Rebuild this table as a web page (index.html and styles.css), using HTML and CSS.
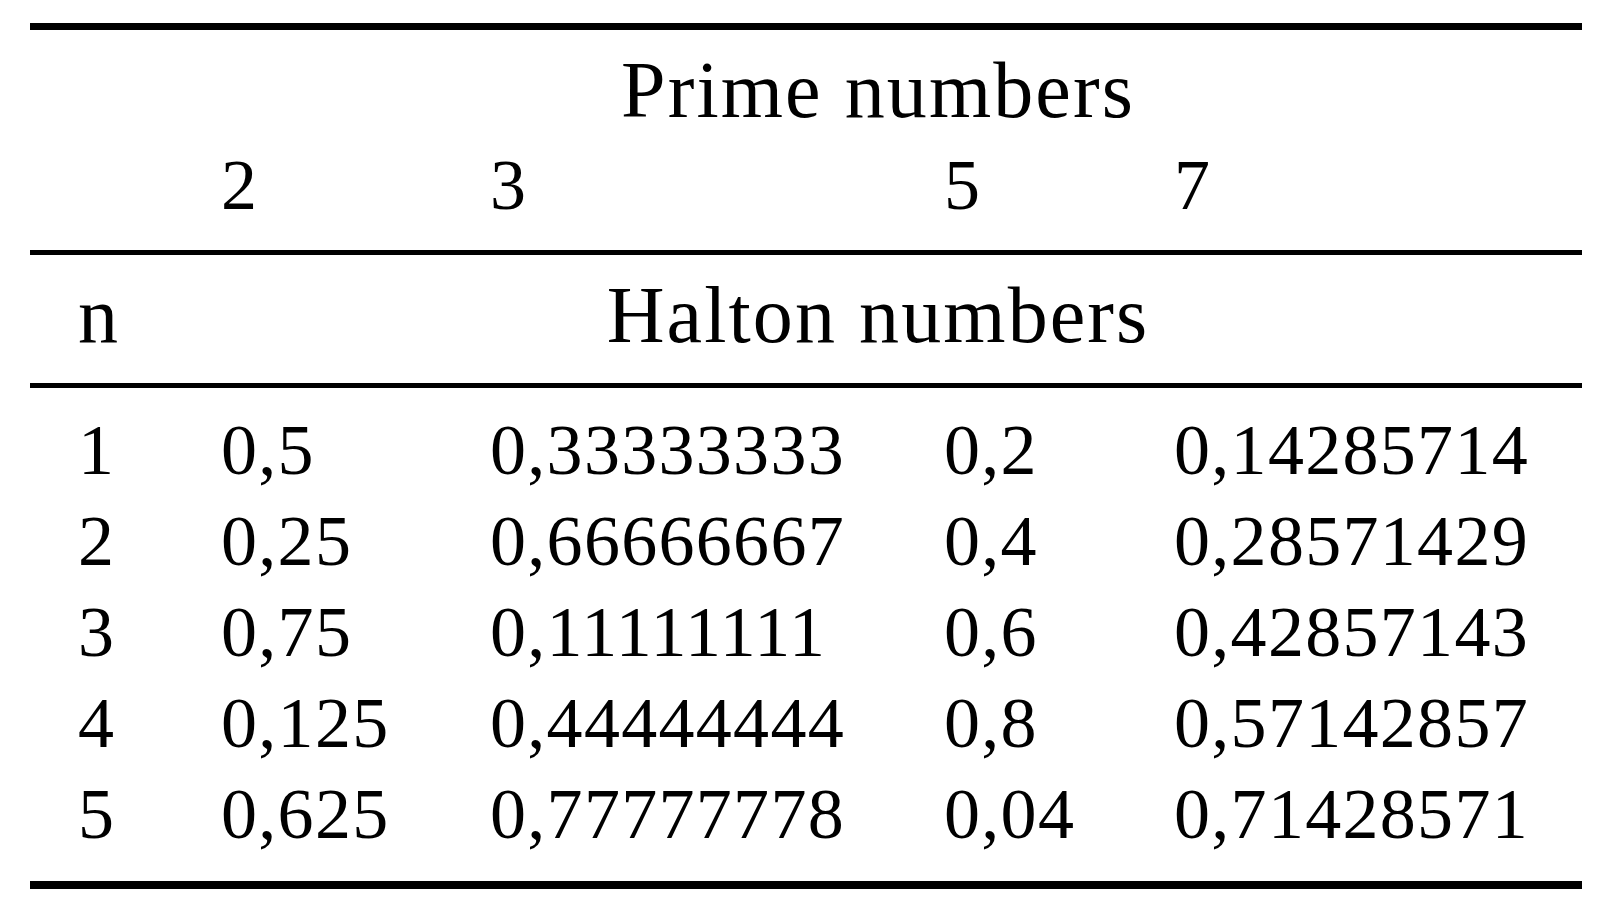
FILE: index.html
```html
<!DOCTYPE html>
<html>
<head>
<meta charset="utf-8">
<link rel="stylesheet" href="styles.css">
</head>
<body>
<div class="table">
  <div class="rule thick"></div>
  <div class="row super">
    <div class="cell span word">Prime numbers</div>
  </div>
  <div class="row primes">
    <div class="cell first"></div>
    <div class="cell">2</div>
    <div class="cell">3</div>
    <div class="cell">5</div>
    <div class="cell">7</div>
  </div>
  <div class="rule mid"></div>
  <div class="row label">
    <div class="cell first word">n</div>
    <div class="cell span word">Halton numbers</div>
  </div>
  <div class="rule mid low"></div>
  <div class="body">
    <div class="row data">
      <div class="cell first">1</div><div class="cell">0,5</div><div class="cell">0,33333333</div><div class="cell">0,2</div><div class="cell">0,14285714</div>
    </div>
    <div class="row data">
      <div class="cell first">2</div><div class="cell">0,25</div><div class="cell">0,66666667</div><div class="cell">0,4</div><div class="cell">0,28571429</div>
    </div>
    <div class="row data">
      <div class="cell first">3</div><div class="cell">0,75</div><div class="cell">0,11111111</div><div class="cell">0,6</div><div class="cell">0,42857143</div>
    </div>
    <div class="row data">
      <div class="cell first">4</div><div class="cell">0,125</div><div class="cell">0,44444444</div><div class="cell">0,8</div><div class="cell">0,57142857</div>
    </div>
    <div class="row data">
      <div class="cell first">5</div><div class="cell">0,625</div><div class="cell">0,77777778</div><div class="cell">0,04</div><div class="cell">0,71428571</div>
    </div>
  </div>
  <div class="rule bottom"></div>
</div>
</body>
</html>
```
FILE: styles.css
```css
html, body {
  margin: 0;
  padding: 0;
  background: #ffffff;
}
body {
  padding-top: 23px;
  padding-left: 30px;
  font-family: "Liberation Serif", "Times New Roman", serif;
  color: #000000;
}
.table {
  width: 1552px;
  display: flex;
  flex-direction: column;
}
.rule {
  background: #000000;
  width: 100%;
}
.rule.thick { height: 7px; }
.rule.mid { height: 5px; }
.rule.bottom { height: 8px; }
.row {
  display: grid;
  grid-template-columns: 138px 269px 454px 230px 461px;
  font-size: 72px;
  white-space: nowrap;
}
.cell {
  padding-left: 53px;
}
.cell.first {
  padding-left: 48px;
}
.cell.span {
  grid-column: 2 / 6;
  padding-left: 0;
  text-align: center;
}
.word {
  font-size: 80px;
  letter-spacing: 2.1px;
}
.cell.span.word {
  text-indent: 6px;
}
.row.super {
  height: 121px;
  line-height: 120px;
}
.row.primes {
  height: 68px;
  line-height: 68px;
  margin-bottom: 31px;
}
.row.label {
  height: 121px;
  line-height: 120px;
  margin-bottom: 7px;
}
.body {
  padding-top: 17px;
  padding-bottom: 21px;
}
.row.data {
  height: 91px;
  line-height: 91px;
  letter-spacing: 1.3px;
}
```
